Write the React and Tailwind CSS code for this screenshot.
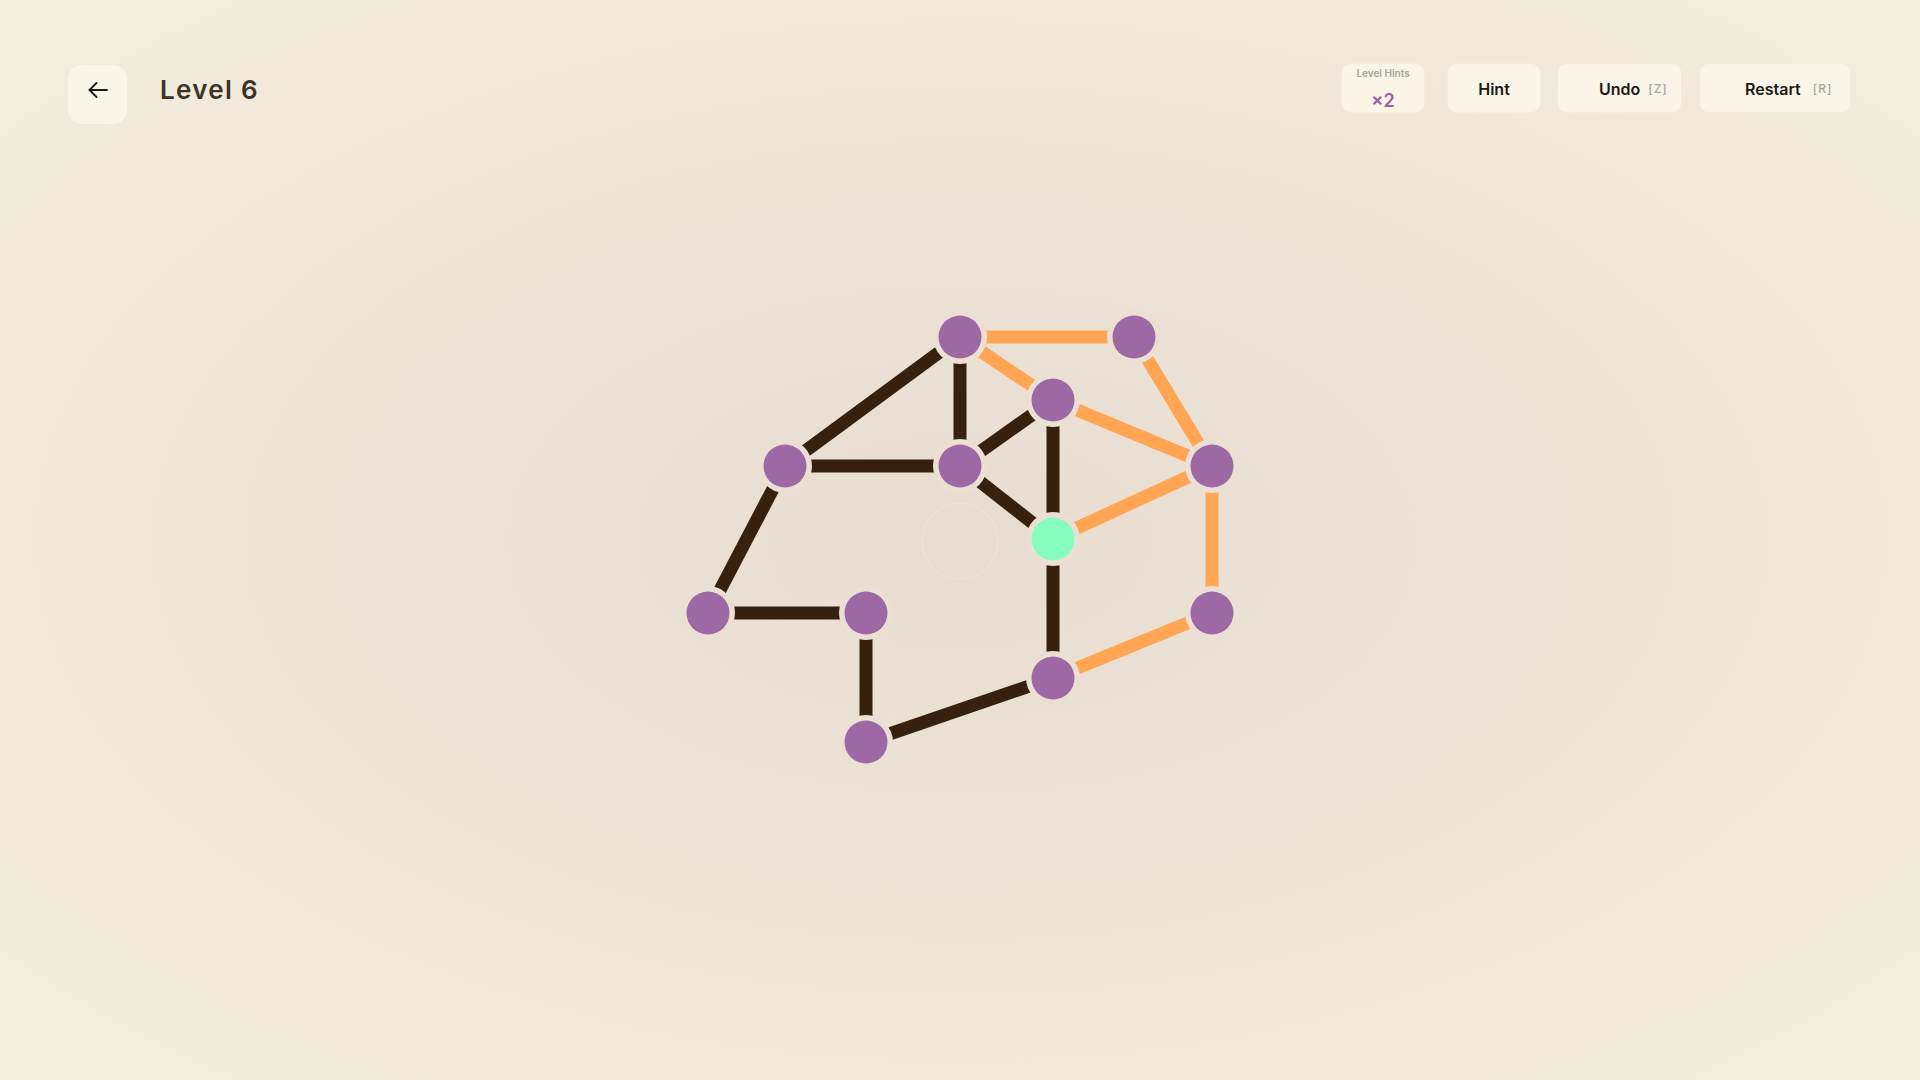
import React from 'react';

// node positions on the board (page coords, 1920x1080)
const nodes = {
  a: [960, 337],
  b: [1134, 337],
  c: [1053, 400],
  d: [785, 466],
  e: [960, 466],
  f: [1212, 466],
  g: [1053, 539],
  h: [708, 613],
  i: [866, 613],
  j: [1212, 613],
  k: [1053, 678],
  l: [866, 742],
};

const darkEdges = [
  ['a', 'd'], ['a', 'e'], ['d', 'e'], ['c', 'e'], ['e', 'g'], ['c', 'g'],
  ['d', 'h'], ['h', 'i'], ['i', 'l'], ['l', 'k'], ['g', 'k'],
];

const orangeEdges = [
  ['a', 'b'], ['a', 'c'], ['b', 'f'], ['c', 'f'], ['g', 'f'], ['f', 'j'], ['j', 'k'],
];

const activeNode = 'g';

const Board = () => {
  return (
    <svg
      className="absolute inset-0 w-full h-full pointer-events-none"
      viewBox="0 0 1920 1080"
      preserveAspectRatio="xMidYMid slice"
    >
      <circle cx="960" cy="541" r="38" fill="none" stroke="#efe6dc" strokeWidth="2" opacity="0.5" />
      {darkEdges.map(([p, q]) => (
        <line
          key={p + q}
          x1={nodes[p][0]}
          y1={nodes[p][1]}
          x2={nodes[q][0]}
          y2={nodes[q][1]}
          stroke="#35210e"
          strokeWidth="13"
        />
      ))}
      {orangeEdges.map(([p, q]) => (
        <line
          key={p + q}
          x1={nodes[p][0]}
          y1={nodes[p][1]}
          x2={nodes[q][0]}
          y2={nodes[q][1]}
          stroke="#ffa553"
          strokeWidth="13"
        />
      ))}
      {Object.entries(nodes).map(([id, [x, y]]) => (
        <g key={id}>
          <circle cx={x} cy={y} r="27" fill="#ebe0d3" />
          <circle cx={x} cy={y} r="21.5" fill={id === activeNode ? '#86fcbf' : '#9c69a4'} />
        </g>
      ))}
    </svg>
  );
};

const ToolButton = ({ label, shortcut, className }) => (
  <button
    className={
      'h-[50px] flex items-center pt-[2px] rounded-[10px] bg-[#faf5e6] border border-[#f3eddf] text-[16px] font-semibold text-[#1d1a16] ' +
      className
    }
  >
    <span>{label}</span>
    {shortcut && (
      <span className="text-[12px] font-medium tracking-[0.08em] text-[#aaa59d]">[{shortcut}]</span>
    )}
  </button>
);

export default function App() {
  return (
    <div className="relative w-full h-screen overflow-hidden font-['Inter','Noto_Sans',sans-serif] bg-[radial-gradient(ellipse_at_50%_50%,#e9ddd1_0%,#ece2d5_35%,#f0e8d9_65%,#f3eedd_100%)]">
      <Board />

      {/* Header */}
      <div className="relative flex items-start justify-between pl-[68px] pr-[69px] pt-[63px]">
        <div className="flex items-start">
          <button className="mt-[2px] w-[59px] h-[59px] rounded-[14px] bg-[#faf6e7] flex items-center justify-center pb-[10px]">
            <svg width="20" height="16" viewBox="0 0 20 16" fill="none" stroke="#1d1a16" strokeWidth="1.8" strokeLinecap="round" strokeLinejoin="round">
              <path d="M19 8H1.5" />
              <path d="M8.5 1 L1.5 8 L8.5 15" />
            </svg>
          </button>
          <h1 className="ml-[33px] h-[52px] flex items-center text-[26px] font-semibold tracking-[0.05em] text-[#3d3229]">
            Level 6
          </h1>
        </div>

        <div className="flex items-start">
          <div className="w-[84px] h-[50px] rounded-[10px] bg-[#faf5e6] border border-[#f3eddf] flex flex-col items-center pt-[2px]">
            <span className="text-[10px] font-semibold text-[#aaa39b] leading-[14px]">Level Hints</span>
            <span className="mt-[12px] text-[18px] font-semibold text-[#9b5fa8] leading-[18px]">×2</span>
          </div>
          <ToolButton label="Hint" className="ml-[22px] w-[94px] justify-center" />
          <ToolButton label="Undo" shortcut="Z" className="ml-[16px] w-[125px] pl-[41px] gap-[8px]" />
          <ToolButton label="Restart" shortcut="R" className="ml-[17px] w-[152px] pl-[45px] gap-3" />
        </div>
      </div>
    </div>
  );
}
